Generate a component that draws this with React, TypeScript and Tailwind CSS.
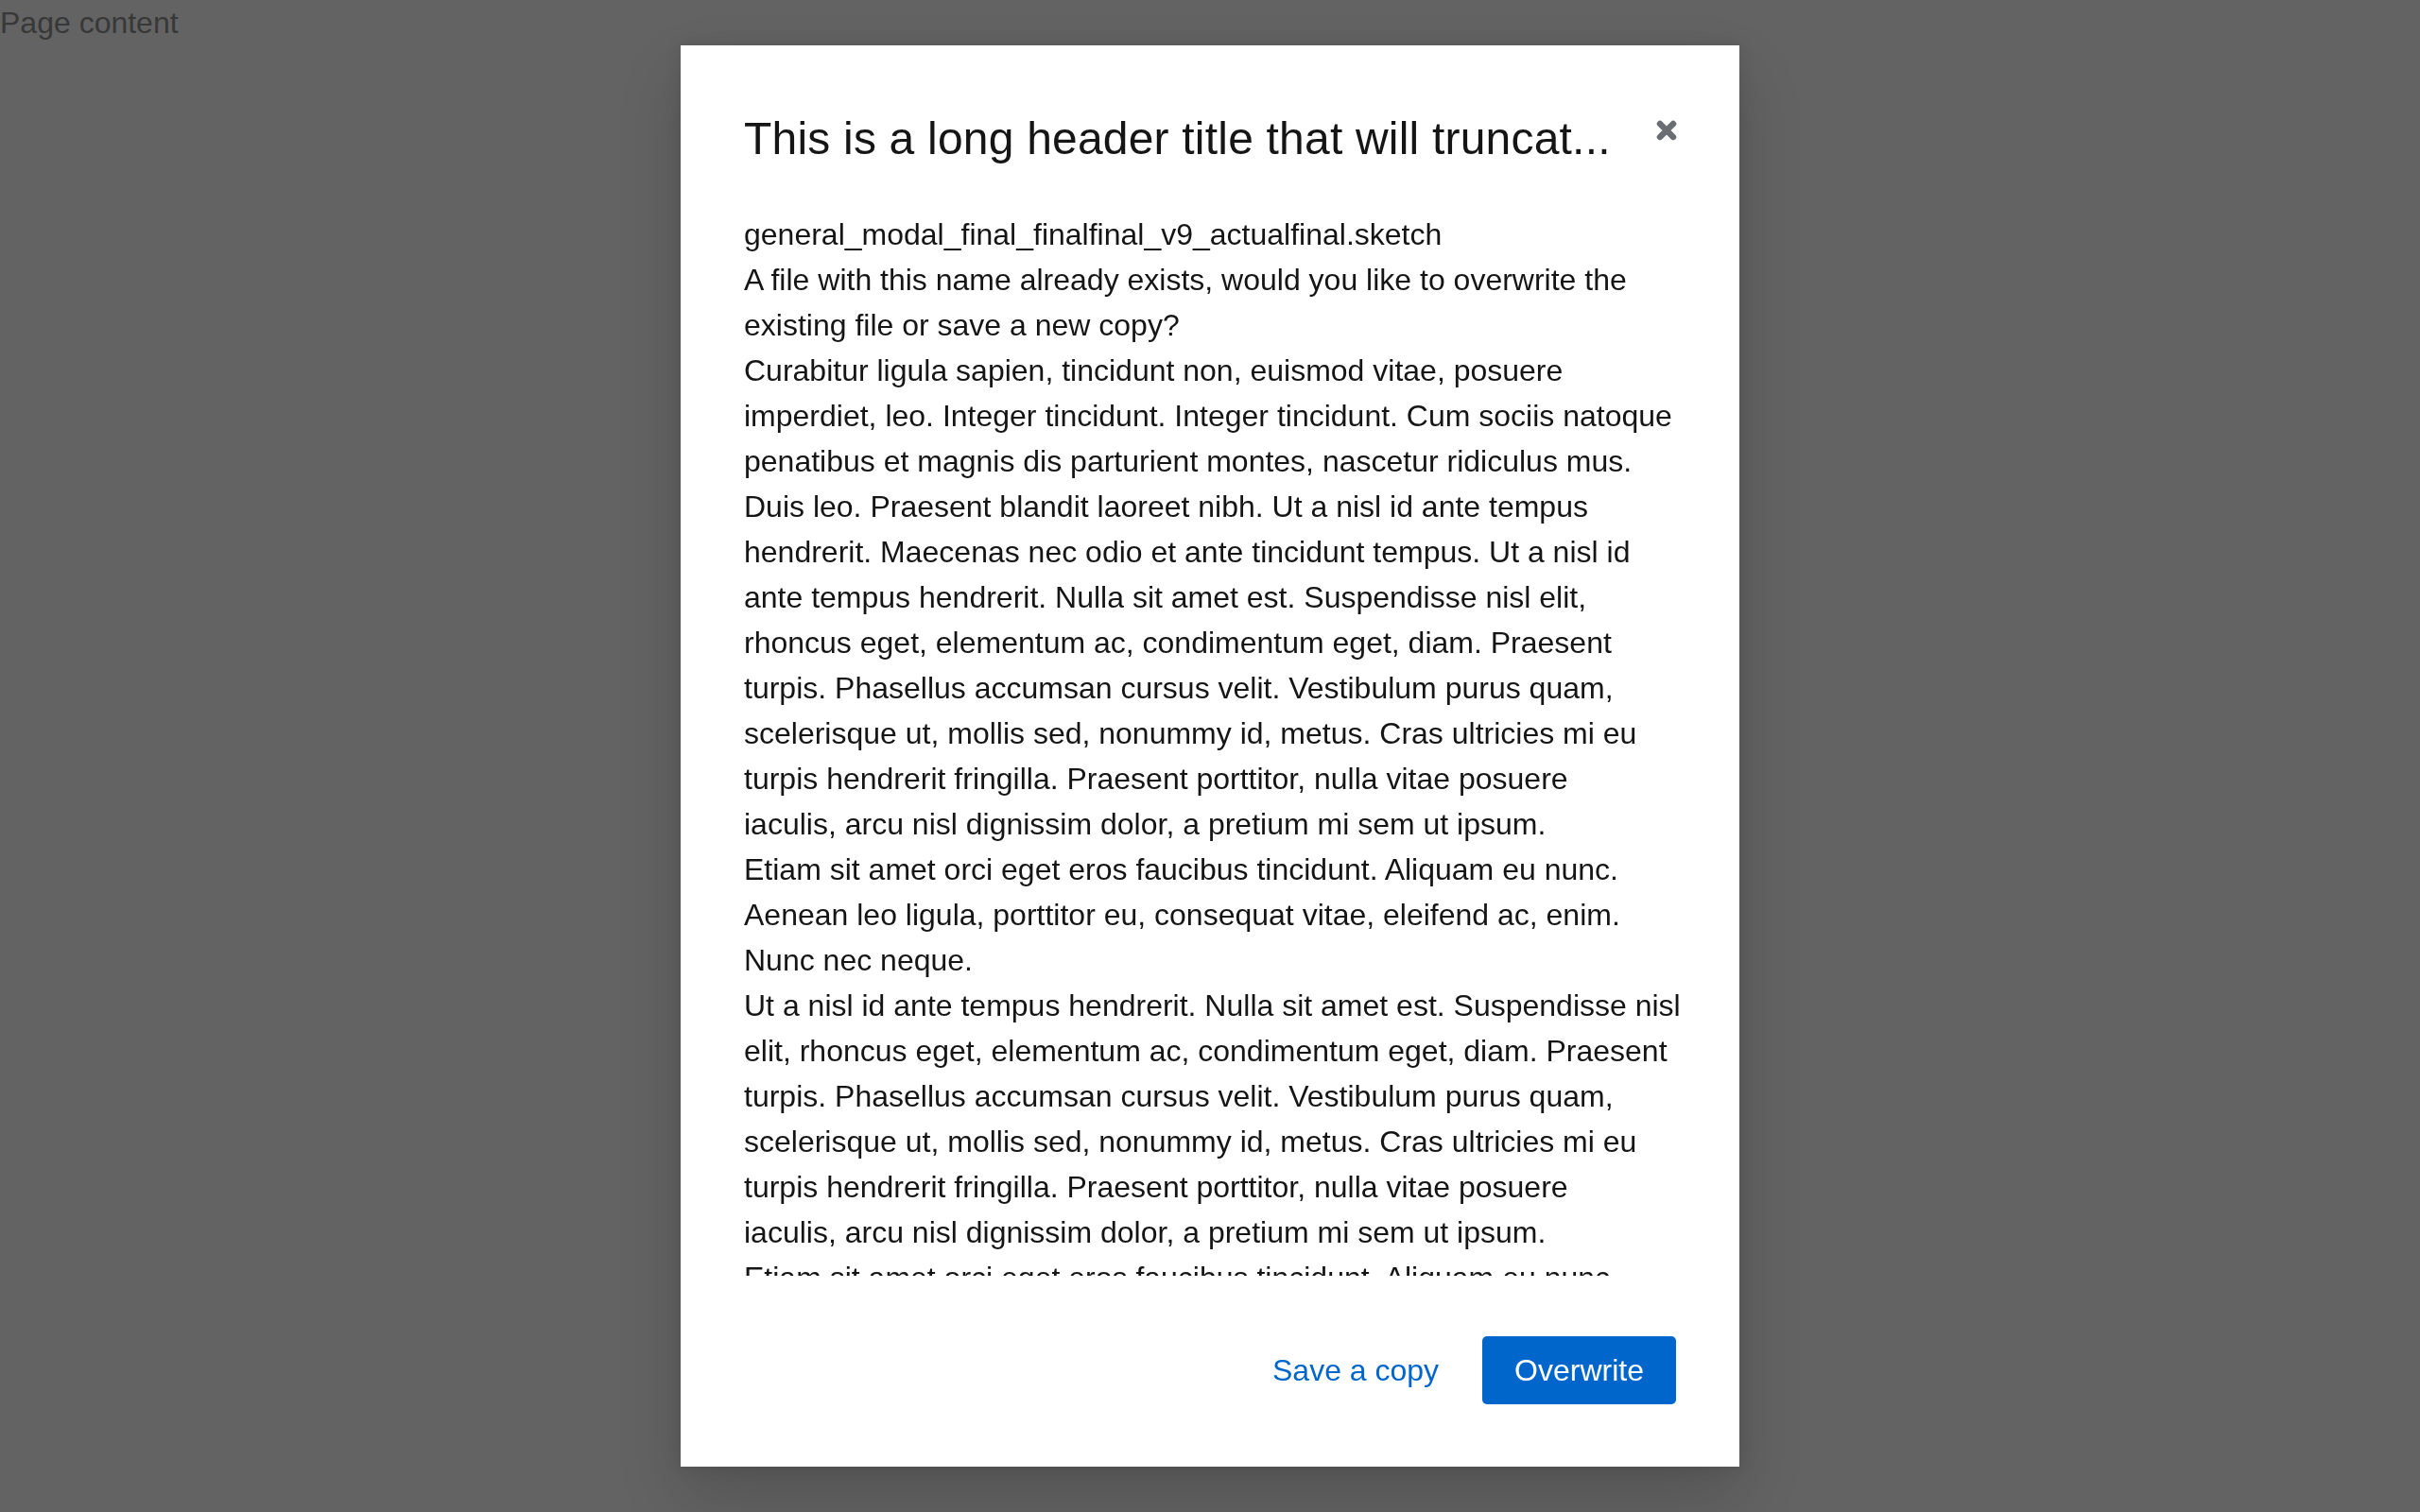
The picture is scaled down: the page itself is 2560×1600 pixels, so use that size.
import * as React from 'react';

const paragraphs: string[][] = [
  ['general_modal_final_finalfinal_v9_actualfinal.sketch'],
  [
    'A file with this name already exists, would you like to overwrite the',
    'existing file or save a new copy?',
  ],
  [
    'Curabitur ligula sapien, tincidunt non, euismod vitae, posuere',
    'imperdiet, leo. Integer tincidunt. Integer tincidunt. Cum sociis natoque',
    'penatibus et magnis dis parturient montes, nascetur ridiculus mus.',
    'Duis leo. Praesent blandit laoreet nibh. Ut a nisl id ante tempus',
    'hendrerit. Maecenas nec odio et ante tincidunt tempus. Ut a nisl id',
    'ante tempus hendrerit. Nulla sit amet est. Suspendisse nisl elit,',
    'rhoncus eget, elementum ac, condimentum eget, diam. Praesent',
    'turpis. Phasellus accumsan cursus velit. Vestibulum purus quam,',
    'scelerisque ut, mollis sed, nonummy id, metus. Cras ultricies mi eu',
    'turpis hendrerit fringilla. Praesent porttitor, nulla vitae posuere',
    'iaculis, arcu nisl dignissim dolor, a pretium mi sem ut ipsum.',
  ],
  [
    'Etiam sit amet orci eget eros faucibus tincidunt. Aliquam eu nunc.',
    'Aenean leo ligula, porttitor eu, consequat vitae, eleifend ac, enim.',
    'Nunc nec neque.',
  ],
  [
    'Ut a nisl id ante tempus hendrerit. Nulla sit amet est. Suspendisse nisl',
    'elit, rhoncus eget, elementum ac, condimentum eget, diam. Praesent',
    'turpis. Phasellus accumsan cursus velit. Vestibulum purus quam,',
    'scelerisque ut, mollis sed, nonummy id, metus. Cras ultricies mi eu',
    'turpis hendrerit fringilla. Praesent porttitor, nulla vitae posuere',
    'iaculis, arcu nisl dignissim dolor, a pretium mi sem ut ipsum.',
  ],
  [
    'Etiam sit amet orci eget eros faucibus tincidunt. Aliquam eu nunc.',
    'Aenean leo ligula, porttitor eu, consequat vitae, eleifend ac, enim.',
    'Nunc nec neque.',
  ],
];

function CloseIcon() {
  return (
    <svg className="w-[22px] h-[22px]" viewBox="0 0 22 22" fill="none">
      <path
        d="M4 4L18 18M18 4L4 18"
        stroke="#6a6e73"
        strokeWidth="6.5"
        strokeLinecap="round"
      />
    </svg>
  );
}

export default function App() {
  return (
    <div className="relative min-h-screen bg-white font-['Liberation_Sans',Arial,sans-serif] text-[#151515]">
      <div className="text-[32px] leading-[48px] text-[#8e8e8e]">Page content</div>

      <div className="fixed inset-0 flex items-center justify-center bg-[rgba(3,3,3,0.62)]">
        <div className="relative flex h-[1504px] w-[1120px] flex-col bg-white pl-16 pr-[67px] shadow-[0_32px_64px_rgba(3,3,3,0.16),0_0_16px_rgba(3,3,3,0.1)]">
          <button className="absolute right-[66px] top-[79px] flex h-[22px] w-[22px] items-center justify-center">
            <CloseIcon />
          </button>

          <header className="pt-[68px] pl-[3px] pr-[80px]">
            <h1 className="whitespace-nowrap text-[48px] font-normal leading-[62px] tracking-[0.2px]">
              This is a long header title that will truncat...
            </h1>
          </header>

          <div className="mt-[46px] -mr-[20px] min-h-0 flex-1 overflow-hidden pl-[3px] text-[32px] leading-[48px]">
            {paragraphs.map((lines, i) => (
              <p key={i}>
                {lines.map((line, j) => (
                  <span key={j} className="block whitespace-nowrap">
                    {line}
                  </span>
                ))}
              </p>
            ))}
          </div>

          <footer className="flex items-center justify-end gap-[14px] pt-[64px] pb-[66px]">
            <button className="h-[72px] px-8 text-[32px] leading-[48px] text-[#0066cc]">
              Save a copy
            </button>
            <button className="h-[72px] rounded-[5px] bg-[#0066cc] px-[34px] text-[32px] leading-[48px] text-white">
              Overwrite
            </button>
          </footer>
        </div>
      </div>
    </div>
  );
}
